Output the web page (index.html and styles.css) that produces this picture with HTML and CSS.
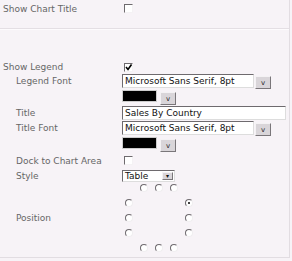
FILE: index.html
```html
<!DOCTYPE html>
<html lang="en">
<head>
    <meta charset="UTF-8">
    <title>Chart Legend Settings</title>
    <link rel="stylesheet" href="styles.css">
</head>
<body>
    <div class="panel">
        <div class="section top">
            <div class="row r-title">
                <span class="label">Show Chart Title</span>
                <span class="check"></span>
            </div>
        </div>

        <div class="section legend">
            <div class="row r-show">
                <span class="label">Show Legend</span>
                <span class="check checked">
                    <svg width="7" height="7" viewBox="0 0 7 7"><polyline points="1,3 3,5.5 6.5,0.5" fill="none" stroke="#000" stroke-width="1.6"/></svg>
                </span>
            </div>
            <div class="row r-font">
                <span class="label sub">Legend Font</span>
                <span class="field font-field">Microsoft Sans Serif, 8pt</span>
                <span class="btn">v</span>
            </div>
            <div class="row r-color">
                <span class="label sub"></span>
                <span class="swatch"></span>
                <span class="btn">v</span>
            </div>
            <div class="row r-text">
                <span class="label sub">Title</span>
                <span class="field text-field">Sales By Country</span>
            </div>
            <div class="row r-font">
                <span class="label sub">Title Font</span>
                <span class="field font-field">Microsoft Sans Serif, 8pt</span>
                <span class="btn">v</span>
            </div>
            <div class="row r-color">
                <span class="label sub"></span>
                <span class="swatch"></span>
                <span class="btn">v</span>
            </div>
            <div class="row r-dock">
                <span class="label sub">Dock to Chart Area</span>
                <span class="check"></span>
            </div>
            <div class="row r-style">
                <span class="label sub">Style</span>
                <span class="select">Table<span class="arrow">&#9662;</span></span>
            </div>
            <div class="row r-pos">
                <span class="label sub">Position</span>
                <div class="positions">
                    <div class="pos-line">
                        <span class="radio"></span><span class="radio"></span><span class="radio"></span>
                    </div>
                    <div class="pos-side">
                        <span class="radio"></span><span class="radio on"></span>
                    </div>
                    <div class="pos-side">
                        <span class="radio"></span><span class="radio"></span>
                    </div>
                    <div class="pos-side">
                        <span class="radio"></span><span class="radio"></span>
                    </div>
                    <div class="pos-line">
                        <span class="radio"></span><span class="radio"></span><span class="radio"></span>
                    </div>
                </div>
            </div>
        </div>
    </div>
</body>
</html>
```

FILE: styles.css
```css
body {
    margin: 0;
    background-color: #f7f3f7;
    font-family: "DejaVu Sans", Verdana, sans-serif;
    font-size: 9px;
    color: #666;
}

.panel {
    width: 289px;
    height: 257px;
    border-right: 1px solid #e2dde2;
    border-bottom: 1px solid #e2dde2;
}

.section.top {
    height: 28px;
    border-bottom: 1px solid #e4dfe4;
    box-shadow: 0 1px 0 #fdfbfd;
}

.legend {
    padding-top: 31px;
}

.row {
    display: flex;
    align-items: center;
}

.label {
    width: 122px;
    flex-shrink: 0;
    box-sizing: border-box;
    padding-left: 3px;
    white-space: nowrap;
}

.label.sub {
    padding-left: 16px;
}

.r-title {
    height: 17px;
}

.r-title .check,
.r-show .check,
.r-dock .check {
    margin-left: 2px;
}

.check {
    width: 9px;
    height: 9px;
    box-sizing: border-box;
    background: #fff;
    border: 1px solid;
    border-color: #6e6a6e #f4f2f4 #f4f2f4 #6e6a6e;
    display: flex;
    align-items: center;
    justify-content: center;
}

.r-show {
    height: 14px;
}

.r-font {
    height: 15px;
    align-items: flex-start;
}

.r-font .label {
    line-height: 15px;
}

.field {
    height: 14px;
    box-sizing: border-box;
    background: #fff;
    color: #111;
    border: 1px solid;
    border-color: #6e6a6e #ddd #ddd #6e6a6e;
    padding-left: 2px;
    line-height: 12px;
    white-space: nowrap;
    overflow: hidden;
}

.font-field {
    width: 132px;
}

.text-field {
    width: 164px;
}

.btn {
    width: 16px;
    height: 13px;
    box-sizing: border-box;
    margin-left: 1px;
    margin-top: 2px;
    background: #d9d5d9;
    border: 1px solid;
    border-color: #f4f2f4 #7a767a #7a767a #f4f2f4;
    color: #222;
    font-size: 7px;
    line-height: 13px;
    text-align: center;
}

.r-color {
    height: 17px;
    align-items: flex-start;
}

.swatch {
    width: 35px;
    height: 12px;
    margin-top: 1px;
    background: #000;
    border: 1px solid #ccc;
    box-sizing: border-box;
}

.r-color .btn {
    margin-left: 3px;
    margin-top: 3px;
}

.r-text {
    height: 15px;
    align-items: flex-start;
}

.r-text .label {
    line-height: 14px;
}

.r-dock {
    height: 15px;
}

.r-style {
    height: 16px;
}

.select {
    width: 53px;
    height: 12px;
    box-sizing: border-box;
    background: #fff;
    color: #111;
    border: 1px solid;
    border-color: #6e6a6e #ddd #ddd #6e6a6e;
    padding-left: 2px;
    line-height: 10px;
    display: flex;
    justify-content: space-between;
}

.select .arrow {
    width: 11px;
    height: 8px;
    margin: 1px 1px 0 0;
    background: #d9d5d9;
    border: 1px solid;
    border-color: #f4f2f4 #7a767a #7a767a #f4f2f4;
    box-sizing: border-box;
    font-size: 6px;
    line-height: 6px;
    text-align: center;
}

.r-pos {
    margin-top: 0;
}

.positions {
    width: 68px;
    margin-left: 3px;
    display: flex;
    flex-direction: column;
    gap: 7px;
}

.pos-line {
    display: flex;
    justify-content: center;
    gap: 7px;
}

.pos-side {
    display: flex;
    justify-content: space-between;
}

.radio {
    width: 8px;
    height: 8px;
    box-sizing: border-box;
    border-radius: 50%;
    background: #fff;
    border: 1px solid;
    border-color: #6e6a6e #f0eef0 #f0eef0 #6e6a6e;
    display: flex;
    align-items: center;
    justify-content: center;
}

.radio.on::after {
    content: "";
    width: 2px;
    height: 2px;
    border-radius: 50%;
    background: #000;
}
```
